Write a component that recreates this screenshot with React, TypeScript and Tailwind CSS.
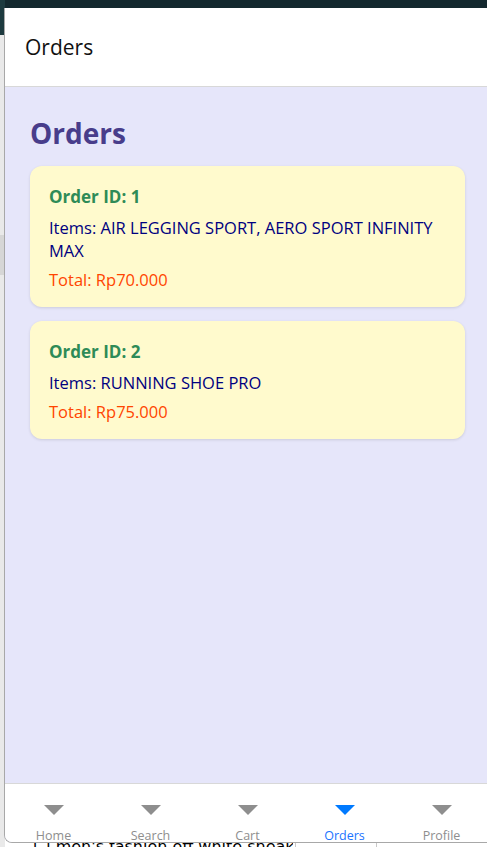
import React from "react";

const orders = [
  { id: 1, items: "AIR LEGGING SPORT, AERO SPORT INFINITY MAX", total: "Rp70.000" },
  { id: 2, items: "RUNNING SHOE PRO", total: "Rp75.000" },
];

const tabs = ["Home", "Search", "Cart", "Orders", "Profile"];

function Arrow({ active }: { active: boolean }) {
  return (
    <svg width="20" height="10" viewBox="0 0 20 10" className="block h-[10px] w-[20px] shrink-0">
      <polygon points="0,0 20,0 10,10" fill={active ? "#007aff" : "#8e8e8e"} />
    </svg>
  );
}

export default function App() {
  return (
    <div
      className="relative h-[847px] w-[487px] overflow-hidden bg-white"
      style={{ fontFamily: '"Open Sans", "Noto Sans", sans-serif' }}
    >
      {/* page behind the window */}
      <div className="absolute left-0 top-0 h-[8px] w-full bg-[#13282e]" />
      <div className="absolute left-0 top-0 h-[35px] w-[5px] bg-[#1d3a3f]" />
      <div className="absolute left-0 top-[35px] h-[812px] w-[5px] bg-[#e9e9e9]" />
      <div className="absolute left-0 top-[235px] h-[40px] w-[5px] bg-[#d6d6d6]" />
      <div className="absolute left-[295px] top-[843px] h-[4px] w-px bg-[#c8c8c8]" />
      <div className="absolute left-[376px] top-[843px] h-[4px] w-px bg-[#c8c8c8]" />
      <div className="absolute left-[33px] top-[843px] h-[4px] w-[260px] overflow-hidden">
        <div
          className="-mt-[4px] whitespace-nowrap text-[16px] leading-[16px] text-black"
          style={{ fontFamily: '"DejaVu Sans", sans-serif' }}
        >
          [.] men's fashion off white sneak
        </div>
      </div>

      {/* app window */}
      <div className="absolute bottom-[4px] left-[4px] right-[-3px] top-[8px] flex flex-col overflow-hidden rounded-bl-[8px] border-b border-l border-[#a8a8a8] bg-[#e6e6fa]">
        <div className="flex h-[79px] shrink-0 items-center border-b border-[#d8d8d8] bg-white pl-[20px] pt-[2px]">
          <span className="text-[21px] font-medium text-[#111111]">Orders</span>
        </div>

        <div className="flex-1 px-[25px] pt-[28px]">
          <h1 className="mb-[15px] text-[28px] font-bold leading-[36px] text-[#483d8b]">Orders</h1>
          <div className="flex w-[435px] flex-col gap-[14px]">
            {orders.map((o) => (
              <div
                key={o.id}
                className="rounded-[12px] bg-[#fffacd] px-[19px] pb-[16px] pt-[19px] shadow-[0_1px_3px_rgba(0,0,0,0.12)]"
              >
                <div className="mb-[7px] text-[17px] font-bold leading-[24px] text-[#2e8b57]">
                  Order ID: {o.id}
                </div>
                <div className="mb-[6px] text-[16.5px] leading-[23px] text-[#000080]">Items: {o.items}</div>
                <div className="text-[16.5px] leading-[23px] text-[#ff4500]">Total: {o.total}</div>
              </div>
            ))}
          </div>
        </div>

        <div className="flex h-[59px] shrink-0 overflow-hidden border-t border-[#d8d8d8] bg-white">
          {tabs.map((t) => (
            <div key={t} className="flex flex-1 flex-col items-center pt-[21px]">
              <Arrow active={t === "Orders"} />
              <span
                className={
                  "mt-[13px] shrink-0 text-[12.5px] leading-[16px] " +
                  (t === "Orders" ? "text-[#1a73ff]" : "text-[#8e8e8e]")
                }
              >
                {t}
              </span>
            </div>
          ))}
        </div>
      </div>
    </div>
  );
}
